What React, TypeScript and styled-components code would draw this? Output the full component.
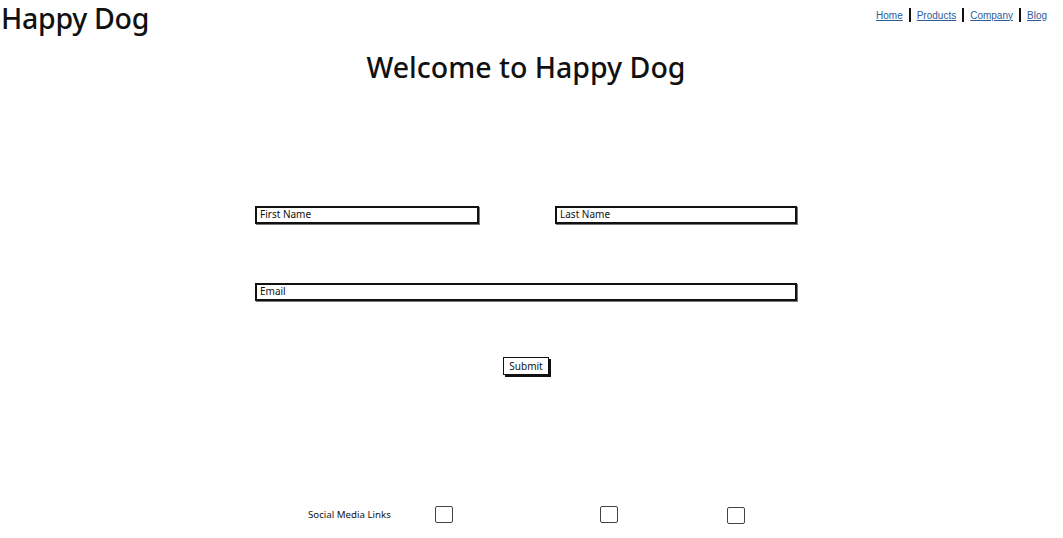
import React from 'react'
import styled, { createGlobalStyle } from 'styled-components'

const GlobalStyle = createGlobalStyle`
  body {
    margin: 0;
    background: #ffffff;
    font-family: "Noto Sans", "Liberation Sans", sans-serif;
    color: #111;
  }
`

const Page = styled.div`
  width: 1063px;
  height: 538px;
  overflow: hidden;
  display: flex;
  flex-direction: column;
`

const Header = styled.header`
  display: flex;
  justify-content: space-between;
  align-items: flex-start;
  height: 36px;
`

const Logo = styled.div`
  font-size: 28.5px;
  font-weight: 500;
  line-height: 36px;
  margin-left: 1px;
  letter-spacing: -0.3px;
`

const Nav = styled.nav`
  display: flex;
  align-items: center;
  gap: 6px;
  margin-top: 8px;
  margin-right: 16px;
`

const NavLink = styled.a`
  font-family: "Liberation Sans", Arial, sans-serif;
  font-size: 10px;
  color: #2e5c97;
  text-decoration: underline;
`

const Divider = styled.span`
  width: 2px;
  height: 14px;
  background: #111;
`

const Title = styled.h1`
  margin: 11px 0 0;
  text-align: center;
  font-size: 28.5px;
  font-weight: 500;
  line-height: 40px;
  padding-right: 11px;
`

const Form = styled.div`
  width: 542px;
  margin: 119px 0 0 255px;
  display: flex;
  flex-direction: column;
`

const Row = styled.div`
  display: flex;
  justify-content: space-between;
`

const Field = styled.div<{ $w: number }>`
  box-sizing: border-box;
  width: ${(p) => p.$w}px;
  height: 18px;
  border: 2px solid #111;
  box-shadow: 1px 1px 0 #777;
  font-size: 10px;
  line-height: 13px;
  padding-left: 3px;
`

const EmailRow = styled(Row)`
  margin-top: 59px;
`

const SubmitRow = styled.div`
  display: flex;
  justify-content: center;
  margin-top: 56px;
`

const Submit = styled.button`
  box-sizing: border-box;
  width: 46px;
  height: 18px;
  padding: 0;
  background: #fff;
  border: 1.5px solid #111;
  box-shadow: 2px 2px 0 #111;
  font-family: "Noto Sans", sans-serif;
  font-size: 10px;
  line-height: 14px;
  color: #111;
`

const Social = styled.div`
  display: flex;
  align-items: center;
  margin: 129px 0 0 308px;
  height: 20px;
`

const SocialLabel = styled.span`
  font-size: 9.7px;
  width: 127px;
`

const Box = styled.span<{ $gap: number; $dy?: number }>`
  box-sizing: border-box;
  width: 18px;
  height: 17px;
  border: 1px solid #444;
  border-radius: 2px;
  margin-right: ${(p) => p.$gap}px;
  margin-top: ${(p) => (p.$dy || 0) * 2}px;
`

export default function App() {
  return (
    <Page>
      <GlobalStyle />
      <Header>
        <Logo>Happy Dog</Logo>
        <Nav>
          <NavLink>Home</NavLink>
          <Divider />
          <NavLink>Products</NavLink>
          <Divider />
          <NavLink>Company</NavLink>
          <Divider />
          <NavLink>Blog</NavLink>
        </Nav>
      </Header>
      <Title>Welcome to Happy Dog</Title>
      <Form>
        <Row>
          <Field $w={224}>First Name</Field>
          <Field $w={242}>Last Name</Field>
        </Row>
        <EmailRow>
          <Field $w={543}>Email</Field>
        </EmailRow>
        <SubmitRow>
          <Submit>Submit</Submit>
        </SubmitRow>
      </Form>
      <Social>
        <SocialLabel>Social Media Links</SocialLabel>
        <Box $gap={147} />
        <Box $gap={109} />
        <Box $gap={0} $dy={1} />
      </Social>
    </Page>
  )
}
